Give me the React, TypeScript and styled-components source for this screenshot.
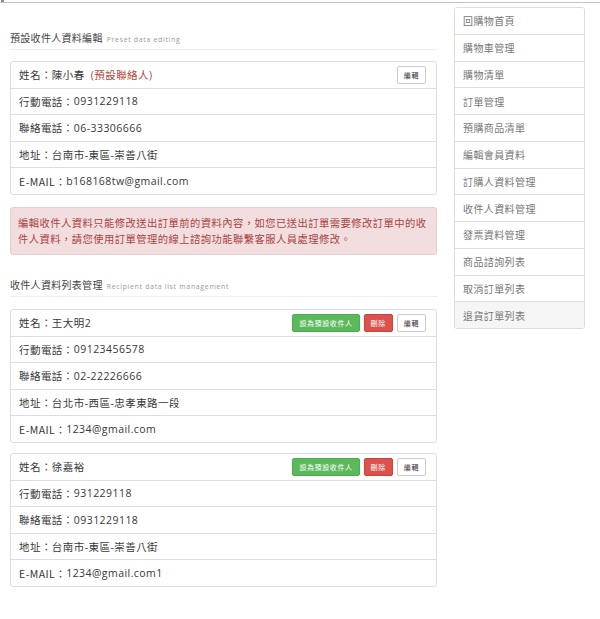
import React from "react";
import styled, { createGlobalStyle } from "styled-components";

const GlobalStyle = createGlobalStyle`
  html, body { margin: 0; padding: 0; background: #fff; }
  body {
    font-family: "Open Sans", "Noto Sans CJK TC", sans-serif;
    color: #333;
  }
  * { box-sizing: border-box; }
`;

const TopEdge = styled.div`
  height: 3px;
  border-bottom: 1px solid #c4c4c4;
  display: flex;
`;

const Mark = styled.span`
  display: block;
  width: 3px;
  height: 2px;
  margin-left: 1px;
  background: #8a8a8a;
`;

const Page = styled.div`
  display: flex;
  align-items: flex-start;
  padding: 4px 15px 30px 10px;
`;

const Main = styled.main`
  width: 427px;
  flex: none;
`;

const SectionTitle = styled.h2<{ $top: number; $bottom: number }>`
  margin: ${(p) => p.$top}px 0 ${(p) => p.$bottom}px;
  height: 20px;
  padding-bottom: 3px;
  border-bottom: 1px solid #eee;
  display: flex;
  align-items: baseline;
  font-size: 10px;
  line-height: 16px;
  font-weight: normal;
  letter-spacing: 0.3px;
  color: #444;
  font-family: "Noto Sans CJK TC", sans-serif;
  overflow: hidden;
`;

const SubTitle = styled.small`
  margin-left: 4px;
  font-family: "Open Sans", sans-serif;
  font-size: 7px;
  line-height: 16px;
  letter-spacing: 0.65px;
  color: #999;
`;

const Card = styled.section<{ $gap?: number }>`
  border: 1px solid #ddd;
  border-radius: 3px;
  margin-bottom: ${(p) => p.$gap ?? 10}px;
  background: #fff;
`;

const Row = styled.div`
  display: flex;
  align-items: center;
  height: 25.6px;
  padding: 0 10px 0 8px;
  font-size: 10.5px;
  letter-spacing: 0.45px;
  color: #383838;
  & + & { border-top: 1px solid #ddd; height: 26.6px; }
`;

const Label = styled.span`
  font-family: "Noto Sans CJK TC", sans-serif;
`;

const Value = styled.span`
  font-family: "Open Sans", "Noto Sans CJK TC", sans-serif;
`;

const DefaultTag = styled.span`
  margin-left: 6px;
  color: #b0463c;
  font-family: "Open Sans", "Noto Sans CJK TC", sans-serif;
`;

const Actions = styled.div`
  margin-left: auto;
  display: flex;
  gap: 4px;
`;

const Btn = styled.button<{ $tone?: "default" | "success" | "danger" }>`
  height: 18px;
  padding: 0 6px;
  display: inline-flex;
  align-items: center;
  border-radius: 2px;
  font-family: "Noto Sans CJK TC", sans-serif;
  font-size: 7px;
  letter-spacing: 0.6px;
  cursor: pointer;
  border: 1px solid
    ${(p) =>
      p.$tone === "success" ? "#4cae4c" : p.$tone === "danger" ? "#d43f3a" : "#ccc"};
  background: ${(p) =>
    p.$tone === "success" ? "#5cb85c" : p.$tone === "danger" ? "#d9534f" : "#fff"};
  color: ${(p) => (p.$tone === "success" || p.$tone === "danger" ? "#fff" : "#333")};
`;

const Alert = styled.div`
  margin-top: 12px;
  height: 48px;
  padding: 7px 8px 7px 7px;
  background: #f2dede;
  border: 1px solid #ebccd1;
  border-radius: 3px;
  color: #a94442;
  font-family: "Noto Sans CJK TC", sans-serif;
  font-size: 10.3px;
  letter-spacing: 0.45px;
  line-height: 16px;
`;

const Side = styled.nav`
  margin-left: 17px;
  width: 131px;
  flex: none;
  border: 1px solid #ddd;
  border-radius: 3px;
  overflow: hidden;
`;

const SideItem = styled.div<{ $active?: boolean }>`
  height: 25.75px;
  display: flex;
  align-items: center;
  padding-left: 8px;
  font-family: "Noto Sans CJK TC", sans-serif;
  font-size: 10px;
  letter-spacing: 0.4px;
  color: #777;
  background: ${(p) => (p.$active ? "#f5f5f5" : "#fff")};
  & + & { border-top: 1px solid #ddd; height: 26.75px; }
`;

type Person = {
  name: string;
  mobile: string;
  phone: string;
  address: string;
  email: string;
};

const list: Person[] = [
  {
    name: "王大明2",
    mobile: "09123456578",
    phone: "02-22226666",
    address: "台北市-西區-忠孝東路一段",
    email: "1234@gmail.com",
  },
  {
    name: "徐嘉裕",
    mobile: "931229118",
    phone: "0931229118",
    address: "台南市-東區-崇善八街",
    email: "1234@gmail.com1",
  },
];

const menu = [
  "回購物首頁",
  "購物車管理",
  "購物清單",
  "訂單管理",
  "預購商品清單",
  "編輯會員資料",
  "訂購人資料管理",
  "收件人資料管理",
  "發票資料管理",
  "商品諮詢列表",
  "取消訂單列表",
  "退貨訂單列表",
];

function Field({ label, value }: { label: string; value: string }) {
  return (
    <Row>
      <Label>{label}：</Label>
      <Value>{value}</Value>
    </Row>
  );
}

export default function App() {
  return (
    <>
      <GlobalStyle />
      <TopEdge>
        <Mark />
      </TopEdge>
      <Page>
        <Main>
          <SectionTitle $top={23} $bottom={11}>
            預設收件人資料編輯<SubTitle>Preset data editing</SubTitle>
          </SectionTitle>
          <Card $gap={0}>
            <Row>
              <Label>姓名：</Label>
              <Value>陳小春</Value>
              <DefaultTag>(預設聯絡人)</DefaultTag>
              <Actions>
                <Btn>編輯</Btn>
              </Actions>
            </Row>
            <Field label="行動電話" value="0931229118" />
            <Field label="聯絡電話" value="06-33306666" />
            <Field label="地址" value="台南市-東區-崇善八街" />
            <Field label="E-MAIL" value="b168168tw@gmail.com" />
          </Card>
          <Alert>
            編輯收件人資料只能修改送出訂單前的資料內容，如您已送出訂單需要修改訂單中的收件人資料，請您使用訂單管理的線上諮詢功能聯繫客服人員處理修改。
          </Alert>
          <SectionTitle $top={22} $bottom={12}>
            收件人資料列表管理<SubTitle>Recipient data list management</SubTitle>
          </SectionTitle>
          {list.map((p) => (
            <Card key={p.name}>
              <Row>
                <Label>姓名：</Label>
                <Value>{p.name}</Value>
                <Actions>
                  <Btn $tone="success">設為預設收件人</Btn>
                  <Btn $tone="danger">刪除</Btn>
                  <Btn>編輯</Btn>
                </Actions>
              </Row>
              <Field label="行動電話" value={p.mobile} />
              <Field label="聯絡電話" value={p.phone} />
              <Field label="地址" value={p.address} />
              <Field label="E-MAIL" value={p.email} />
            </Card>
          ))}
        </Main>
        <Side>
          {menu.map((m, i) => (
            <SideItem key={m} $active={i === menu.length - 1}>
              {m}
            </SideItem>
          ))}
        </Side>
      </Page>
    </>
  );
}
